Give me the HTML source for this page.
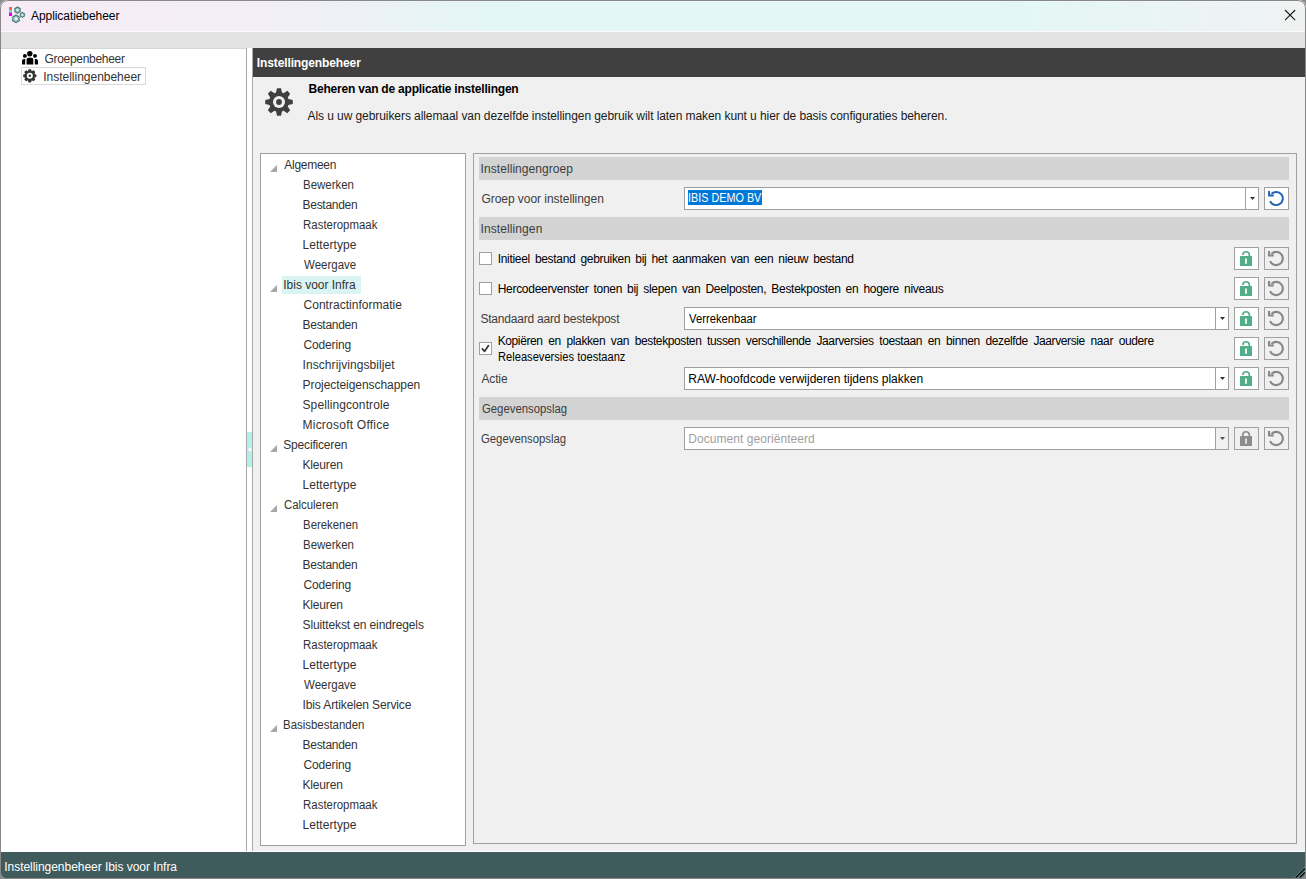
<!DOCTYPE html>
<html><head><meta charset="utf-8"><style>
*{box-sizing:border-box;margin:0;padding:0}
html,body{width:1306px;height:879px;overflow:hidden;background:#8c8c8c}
body{font-family:"Liberation Sans",sans-serif;font-size:12px;position:relative}
.a{position:absolute}
.t{position:absolute;white-space:nowrap;line-height:16px;font-size:12px;font-family:"Liberation Sans",sans-serif}
#win{position:absolute;left:0;top:0;width:1306px;height:879px;background:#f0f0f0;border-radius:8px 8px 7px 7px;overflow:hidden}
#frame{position:absolute;left:0;top:0;width:1306px;height:879px;border:1px solid #888;border-radius:8px 8px 7px 7px}
#title{position:absolute;left:0;top:0;width:1306px;height:31px;background:linear-gradient(90deg,#f7ebf6 0px,#f1eff7 300px,#e2f7f6 520px,#e3f7f6 1000px,#f0f2f2 1306px)}
#tline{position:absolute;left:0;top:31px;width:1306px;height:1px;background:#fbfbfb}
#band{position:absolute;left:0;top:32px;width:1306px;height:16px;background:#e3e3e3}
#left{position:absolute;left:0;top:48px;width:246px;height:804px;background:#fff}
#status{position:absolute;left:0;top:852px;width:1306px;height:27px;background:#3f5b5b}
.vl{position:absolute;width:1px;background:#a9a9a9}
#hdr{position:absolute;left:253px;top:48px;width:1053px;height:29px;background:#404040}
.box{position:absolute;border:1px solid #a0a0a0}
.sec{position:absolute;left:479px;width:810px;height:23px;background:#d3d3d3}
.dd{position:absolute;height:23px;border:1px solid #a0a0a0;background:#fff}
.dd i{position:absolute;right:12px;top:-1px;width:1px;height:23px;background:#a0a0a0}
.btn{position:absolute;width:25px;height:23px;border:1px solid #a0a0a0;background:#fff}
.btn.g{background:#f0f0f0}
.cb{position:absolute;left:479px;width:13px;height:13px;border:1px solid #a0a0a0;background:#fff}
svg{position:absolute;left:0;top:0;overflow:visible}
</style></head><body>
<div id="win">
<div id="title"></div><div id="tline"></div><div id="band"></div>
<div id="left"></div>
<div class="a" style="left:0;top:48px;width:246px;height:1px;background:#d6d6d6"></div>
<div class="a" style="left:246px;top:48px;width:7px;height:1px;background:#b4b4b4"></div>
<div class="vl" style="left:246px;top:48px;height:804px"></div>
<div class="a" style="left:247px;top:48px;width:5px;height:804px;background:#fff"></div>
<div class="vl" style="left:252px;top:48px;height:804px"></div>
<div class="a" style="left:247px;top:432px;width:5px;height:35px;background:#b3f0ec"></div>
<div id="hdr"></div>
<div class="a" style="left:21px;top:67px;width:125px;height:18px;border:1px solid #d9d9d9"></div>
<div class="box" style="left:260px;top:153px;width:206px;height:693px;background:#fff"></div>
<div class="box" style="left:473px;top:153px;width:824px;height:691px"></div>
<div class="a" style="left:282px;top:276px;width:79px;height:18px;background:#daf4f4"></div>
<div class="sec" style="top:157px"></div>
<div class="sec" style="top:217px"></div>
<div class="sec" style="top:397px"></div>
<div class="dd" style="left:684px;top:187px;width:575px"><i></i></div>
<div class="dd" style="left:684px;top:307px;width:545px"><i></i></div>
<div class="dd" style="left:684px;top:367px;width:545px"><i></i></div>
<div class="dd" style="left:684px;top:427px;width:545px"><i></i><b style="position:absolute;right:0;top:0;width:12px;height:21px;background:#f0f0f0"></b></div>
<div class="a" style="left:688px;top:190px;width:74px;height:15px;background:#0078d7"></div>
<div class="btn" style="left:1264px;top:187px"></div>
<div class="btn" style="left:1234px;top:247px"></div>
<div class="btn g" style="left:1264px;top:247px"></div>
<div class="btn" style="left:1234px;top:277px"></div>
<div class="btn g" style="left:1264px;top:277px"></div>
<div class="btn" style="left:1234px;top:307px"></div>
<div class="btn g" style="left:1264px;top:307px"></div>
<div class="btn" style="left:1234px;top:337px"></div>
<div class="btn g" style="left:1264px;top:337px"></div>
<div class="btn" style="left:1234px;top:367px"></div>
<div class="btn g" style="left:1264px;top:367px"></div>
<div class="btn g" style="left:1234px;top:427px"></div>
<div class="btn g" style="left:1264px;top:427px"></div>
<div class="cb" style="top:252px"></div>
<div class="cb" style="top:282px"></div>
<div class="cb" style="top:342px"></div>
<div class="a" style="left:0;top:851px;width:1306px;height:1px;background:#fff"></div>
<div id="status"></div>
<div class="t" style="left:31.00px;top:8px;color:#000;letter-spacing:-0.067px">Applicatiebeheer</div>
<div class="t" style="left:44.50px;top:51px;color:#333;letter-spacing:-0.300px">Groepenbeheer</div>
<div class="t" style="left:43.30px;top:69px;color:#333;letter-spacing:-0.018px">Instellingenbeheer</div>
<div class="t" style="left:256.80px;top:55px;color:#fff;letter-spacing:-0.118px;font-weight:700">Instellingenbeheer</div>
<div class="t" style="left:308.60px;top:81px;color:#000;letter-spacing:-0.216px;font-weight:700">Beheren van de applicatie instellingen</div>
<div class="t" style="left:307.50px;top:108px;color:#1a1a1a;letter-spacing:-0.074px">Als u uw gebruikers allemaal van dezelfde instellingen gebruik wilt laten maken kunt u hier de basis configuraties beheren.</div>
<div class="t" style="left:480.60px;top:161px;color:#3c3c3c;letter-spacing:0.062px">Instellingengroep</div>
<div class="t" style="left:481.40px;top:191px;color:#3c3c3c;letter-spacing:-0.045px">Groep voor instellingen</div>
<div class="t" style="left:687.60px;top:190px;color:#fff;transform:scaleX(0.9000);transform-origin:1px 0">IBIS DEMO BV</div>
<div class="t" style="left:480.60px;top:221px;color:#3c3c3c;letter-spacing:0.091px">Instellingen</div>
<div class="t" style="left:497.70px;top:251px;color:#000;letter-spacing:-0.312px;word-spacing:2.00px">Initieel bestand gebruiken bij het aanmaken van een nieuw bestand</div>
<div class="t" style="left:497.70px;top:281px;color:#000;letter-spacing:-0.291px;word-spacing:2.00px">Hercodeervenster tonen bij slepen van Deelposten, Bestekposten en hogere niveaus</div>
<div class="t" style="left:480.40px;top:311px;color:#3c3c3c;letter-spacing:-0.208px">Standaard aard bestekpost</div>
<div class="t" style="left:689.30px;top:311px;color:#000;transform:scaleX(0.9375);transform-origin:0px 0">Verrekenbaar</div>
<div class="t" style="left:497.70px;top:333px;color:#000;letter-spacing:-0.391px;word-spacing:2.75px">Kopiëren en plakken van bestekposten tussen verschillende Jaarversies toestaan en binnen dezelfde Jaarversie naar oudere</div>
<div class="t" style="left:497.70px;top:349px;color:#000;transform:scaleX(0.9265);transform-origin:1px 0">Releaseversies toestaanz</div>
<div class="t" style="left:481.40px;top:371px;color:#3c3c3c;letter-spacing:-0.125px">Actie</div>
<div class="t" style="left:688.30px;top:371px;color:#000;letter-spacing:0.000px">RAW-hoofdcode verwijderen tijdens plakken</div>
<div class="t" style="left:481.60px;top:401px;color:#3c3c3c;transform:scaleX(0.9444);transform-origin:0px 0">Gegevensopslag</div>
<div class="t" style="left:481.40px;top:431px;color:#3c3c3c;transform:scaleX(0.9444);transform-origin:0px 0">Gegevensopslag</div>
<div class="t" style="left:688.30px;top:431px;color:#a0a0a0;letter-spacing:0.050px">Document georiënteerd</div>
<div class="t" style="left:4.30px;top:859px;color:#fff;letter-spacing:-0.042px">Instellingenbeheer Ibis voor Infra</div>
<div class="t" style="left:284.30px;top:157px;color:#333;letter-spacing:-0.286px">Algemeen</div>
<div class="t" style="left:302.50px;top:177px;color:#333;transform:scaleX(0.9538);transform-origin:1px 0">Bewerken</div>
<div class="t" style="left:302.50px;top:197px;color:#333;letter-spacing:-0.275px">Bestanden</div>
<div class="t" style="left:302.50px;top:217px;color:#333;transform:scaleX(0.9532);transform-origin:1px 0">Rasteropmaak</div>
<div class="t" style="left:302.50px;top:237px;color:#333;letter-spacing:0.056px">Lettertype</div>
<div class="t" style="left:303.50px;top:257px;color:#333;transform:scaleX(0.9574);transform-origin:0px 0">Weergave</div>
<div class="t" style="left:283.30px;top:277px;color:#333;letter-spacing:-0.021px">Ibis voor Infra</div>
<div class="t" style="left:303.50px;top:297px;color:#333;letter-spacing:0.024px">Contractinformatie</div>
<div class="t" style="left:302.50px;top:317px;color:#333;letter-spacing:-0.275px">Bestanden</div>
<div class="t" style="left:303.50px;top:337px;color:#333;letter-spacing:-0.143px">Codering</div>
<div class="t" style="left:302.50px;top:357px;color:#333;letter-spacing:0.078px">Inschrijvingsbiljet</div>
<div class="t" style="left:302.50px;top:377px;color:#333;letter-spacing:-0.053px">Projecteigenschappen</div>
<div class="t" style="left:302.50px;top:397px;color:#333;letter-spacing:0.100px">Spellingcontrole</div>
<div class="t" style="left:302.50px;top:417px;color:#333;letter-spacing:0.233px">Microsoft Office</div>
<div class="t" style="left:283.30px;top:437px;color:#333;letter-spacing:-0.182px">Specificeren</div>
<div class="t" style="left:302.50px;top:457px;color:#333;letter-spacing:-0.167px">Kleuren</div>
<div class="t" style="left:302.50px;top:477px;color:#333;letter-spacing:0.056px">Lettertype</div>
<div class="t" style="left:284.30px;top:497px;color:#333;transform:scaleX(0.9474);transform-origin:0px 0">Calculeren</div>
<div class="t" style="left:302.50px;top:517px;color:#333;transform:scaleX(0.9474);transform-origin:1px 0">Berekenen</div>
<div class="t" style="left:302.50px;top:537px;color:#333;transform:scaleX(0.9538);transform-origin:1px 0">Bewerken</div>
<div class="t" style="left:302.50px;top:557px;color:#333;letter-spacing:-0.275px">Bestanden</div>
<div class="t" style="left:303.50px;top:577px;color:#333;letter-spacing:-0.143px">Codering</div>
<div class="t" style="left:302.50px;top:597px;color:#333;letter-spacing:-0.167px">Kleuren</div>
<div class="t" style="left:302.50px;top:617px;color:#333;letter-spacing:-0.117px">Sluittekst en eindregels</div>
<div class="t" style="left:302.50px;top:637px;color:#333;transform:scaleX(0.9532);transform-origin:1px 0">Rasteropmaak</div>
<div class="t" style="left:302.50px;top:657px;color:#333;letter-spacing:0.056px">Lettertype</div>
<div class="t" style="left:303.50px;top:677px;color:#333;transform:scaleX(0.9574);transform-origin:0px 0">Weergave</div>
<div class="t" style="left:302.50px;top:697px;color:#333;letter-spacing:-0.119px">Ibis Artikelen Service</div>
<div class="t" style="left:283.30px;top:717px;color:#333;transform:scaleX(0.9524);transform-origin:1px 0">Basisbestanden</div>
<div class="t" style="left:302.50px;top:737px;color:#333;letter-spacing:-0.275px">Bestanden</div>
<div class="t" style="left:303.50px;top:757px;color:#333;letter-spacing:-0.143px">Codering</div>
<div class="t" style="left:302.50px;top:777px;color:#333;letter-spacing:-0.167px">Kleuren</div>
<div class="t" style="left:302.50px;top:797px;color:#333;transform:scaleX(0.9532);transform-origin:1px 0">Rasteropmaak</div>
<div class="t" style="left:302.50px;top:817px;color:#333;letter-spacing:0.056px">Lettertype</div>
<svg width="1306" height="879" viewBox="0 0 1306 879"><rect x="9" y="7" width="3" height="3" fill="#ef6b54"/><rect x="9" y="10" width="3" height="2.5" fill="#76d9c9"/><rect x="9" y="12.5" width="3" height="3.5" fill="#dd00ea"/><path d="M16.49,7.86 L16.81,7.03 L18.19,7.03 L18.51,7.86 A2.46,2.46 0 0 1 18.94,8.11 L19.81,7.96 L20.51,9.16 L19.94,9.85 A2.46,2.46 0 0 1 19.94,10.35 L20.51,11.04 L19.81,12.24 L18.94,12.09 A2.46,2.46 0 0 1 18.51,12.34 L18.19,13.17 L16.81,13.17 L16.49,12.34 A2.46,2.46 0 0 1 16.06,12.09 L15.19,12.24 L14.49,11.04 L15.06,10.35 A2.46,2.46 0 0 1 15.06,9.85 L14.49,9.16 L15.19,7.96 L16.06,8.11 A2.46,2.46 0 0 1 16.49,7.86 Z" fill="#80c4bb" stroke="#2d5e59" stroke-width="0.9"/><circle cx="17.5" cy="10.1" r="1.57" fill="#fbfdfd" stroke="#4f8f88" stroke-width="0.4"/><path d="M21.62,13.16 L21.86,12.51 L22.94,12.51 L23.18,13.16 A1.91,1.91 0 0 1 23.52,13.35 L24.20,13.24 L24.74,14.17 L24.30,14.71 A1.91,1.91 0 0 1 24.30,15.09 L24.74,15.63 L24.20,16.56 L23.52,16.45 A1.91,1.91 0 0 1 23.18,16.64 L22.94,17.29 L21.86,17.29 L21.62,16.64 A1.91,1.91 0 0 1 21.28,16.45 L20.60,16.56 L20.06,15.63 L20.50,15.09 A1.91,1.91 0 0 1 20.50,14.71 L20.06,14.17 L20.60,13.24 L21.28,13.35 A1.91,1.91 0 0 1 21.62,13.16 Z" fill="#80c4bb" stroke="#2d5e59" stroke-width="0.9"/><circle cx="22.4" cy="14.9" r="1.23" fill="#fbfdfd" stroke="#4f8f88" stroke-width="0.4"/><path d="M14.77,16.06 L15.15,15.04 L16.85,15.04 L17.23,16.06 A3.00,3.00 0 0 1 17.76,16.36 L18.83,16.19 L19.68,17.66 L18.99,18.50 A3.00,3.00 0 0 1 18.99,19.10 L19.68,19.94 L18.83,21.41 L17.76,21.24 A3.00,3.00 0 0 1 17.23,21.54 L16.85,22.56 L15.15,22.56 L14.77,21.54 A3.00,3.00 0 0 1 14.24,21.24 L13.17,21.41 L12.32,19.94 L13.01,19.10 A3.00,3.00 0 0 1 13.01,18.50 L12.32,17.66 L13.17,16.19 L14.24,16.36 A3.00,3.00 0 0 1 14.77,16.06 Z" fill="#80c4bb" stroke="#2d5e59" stroke-width="0.9"/><circle cx="16" cy="18.8" r="1.93" fill="#fbfdfd" stroke="#4f8f88" stroke-width="0.4"/><path d="M1285,10 L1295.2,20.2 M1295.2,10 L1285,20.2" stroke="#1a1a1a" stroke-width="1.1" fill="none"/><g fill="#000"><circle cx="29.8" cy="53.8" r="2.7"/><circle cx="24.9" cy="55.9" r="1.95"/><circle cx="35" cy="55.9" r="1.95"/><path d="M26.6,59.6 Q26.6,57.8 28.4,57.8 L31.5,57.8 Q33.3,57.8 33.3,59.6 L33.3,64.6 L26.6,64.6 Z"/><path d="M25.2,59 L25.2,64.6 L23.2,64.6 Q22,64.6 22,63.4 L22,61 Q22,59 24,59 Z"/><path d="M34.8,59 L34.8,64.6 L36.8,64.6 Q38,64.6 38,63.4 L38,61 Q38,59 36,59 Z"/></g><path d="M27.90,71.28 L28.55,69.22 L31.05,69.22 L31.70,71.28 A4.90,4.90 0 0 1 31.65,71.26 L33.57,70.26 L35.34,72.03 L34.34,73.95 A4.90,4.90 0 0 1 34.32,73.90 L36.38,74.55 L36.38,77.05 L34.32,77.70 A4.90,4.90 0 0 1 34.34,77.65 L35.34,79.57 L33.57,81.34 L31.65,80.34 A4.90,4.90 0 0 1 31.70,80.32 L31.05,82.38 L28.55,82.38 L27.90,80.32 A4.90,4.90 0 0 1 27.95,80.34 L26.03,81.34 L24.26,79.57 L25.26,77.65 A4.90,4.90 0 0 1 25.28,77.70 L23.22,77.05 L23.22,74.55 L25.28,73.90 A4.90,4.90 0 0 1 25.26,73.95 L24.26,72.03 L26.03,70.26 L27.95,71.26 A4.90,4.90 0 0 1 27.90,71.28 Z" fill="#333"/><circle cx="29.8" cy="75.8" r="3.0" fill="#fff"/><circle cx="29.8" cy="75.8" r="1.2" fill="#333"/><path d="M276.00,92.57 L277.00,88.24 L281.00,88.24 L282.00,92.57 A9.90,9.90 0 0 1 283.55,93.21 L287.31,90.86 L290.14,93.69 L287.79,97.45 A9.90,9.90 0 0 1 288.43,99.00 L292.76,100.00 L292.76,104.00 L288.43,105.00 A9.90,9.90 0 0 1 287.79,106.55 L290.14,110.31 L287.31,113.14 L283.55,110.79 A9.90,9.90 0 0 1 282.00,111.43 L281.00,115.76 L277.00,115.76 L276.00,111.43 A9.90,9.90 0 0 1 274.45,110.79 L270.69,113.14 L267.86,110.31 L270.21,106.55 A9.90,9.90 0 0 1 269.57,105.00 L265.24,104.00 L265.24,100.00 L269.57,99.00 A9.90,9.90 0 0 1 270.21,97.45 L267.86,93.69 L270.69,90.86 L274.45,93.21 A9.90,9.90 0 0 1 276.00,92.57 Z" fill="#404040"/><circle cx="279" cy="102" r="6" fill="#f0f0f0"/><circle cx="279" cy="102" r="2.9" fill="#404040"/><path d="M277,165 L277,172 L270,172 Z" fill="#a6a6a6"/><path d="M277,285 L277,292 L270,292 Z" fill="#a6a6a6"/><path d="M277,445 L277,452 L270,452 Z" fill="#a6a6a6"/><path d="M277,505 L277,512 L270,512 Z" fill="#a6a6a6"/><path d="M277,725 L277,732 L270,732 Z" fill="#a6a6a6"/><path d="M251.2,447.2 L251.2,451.8 L247.8,449.5 Z" fill="#fff"/><path d="M1250.0,197 L1255.0,197 L1252.5,200 Z" fill="#333"/><path d="M1220.0,317 L1225.0,317 L1222.5,320 Z" fill="#333"/><path d="M1220.0,377 L1225.0,377 L1222.5,380 Z" fill="#333"/><path d="M1220,437 L1225,437 L1222.5,440 Z" fill="#555"/><path d="M1271.45,193.92 A6.6,6.6 0 1 1 1270.12,201.08" fill="none" stroke="#1f63b2" stroke-width="1.95"/><path d="M1269.05,191.1 V195.45 H1273.8" fill="none" stroke="#1f63b2" stroke-width="1.95"/><path d="M1271.45,253.92 A6.6,6.6 0 1 1 1270.12,261.08" fill="none" stroke="#888888" stroke-width="2.15"/><path d="M1269.05,251.1 V255.45 H1273.8" fill="none" stroke="#888888" stroke-width="2.15"/><path d="M1271.45,283.92 A6.6,6.6 0 1 1 1270.12,291.08" fill="none" stroke="#888888" stroke-width="2.15"/><path d="M1269.05,281.1 V285.45 H1273.8" fill="none" stroke="#888888" stroke-width="2.15"/><path d="M1271.45,313.92 A6.6,6.6 0 1 1 1270.12,321.08" fill="none" stroke="#888888" stroke-width="2.15"/><path d="M1269.05,311.1 V315.45 H1273.8" fill="none" stroke="#888888" stroke-width="2.15"/><path d="M1271.45,343.92 A6.6,6.6 0 1 1 1270.12,351.08" fill="none" stroke="#888888" stroke-width="2.15"/><path d="M1269.05,341.1 V345.45 H1273.8" fill="none" stroke="#888888" stroke-width="2.15"/><path d="M1271.45,373.92 A6.6,6.6 0 1 1 1270.12,381.08" fill="none" stroke="#888888" stroke-width="2.15"/><path d="M1269.05,371.1 V375.45 H1273.8" fill="none" stroke="#888888" stroke-width="2.15"/><path d="M1271.45,433.92 A6.6,6.6 0 1 1 1270.12,441.08" fill="none" stroke="#888888" stroke-width="2.15"/><path d="M1269.05,431.1 V435.45 H1273.8" fill="none" stroke="#888888" stroke-width="2.15"/><rect x="1240" y="256" width="12" height="10" rx="0.5" fill="#52ae88"/><rect x="1245" y="258.5" width="2" height="5.3" fill="#e6f4ec"/><path d="M1242.85,255.0 A3.25,3.25 0 0 1 1249.35,255.0 V256.5" fill="none" stroke="#52ae88" stroke-width="1.7"/><rect x="1240" y="286" width="12" height="10" rx="0.5" fill="#52ae88"/><rect x="1245" y="288.5" width="2" height="5.3" fill="#e6f4ec"/><path d="M1242.85,285.0 A3.25,3.25 0 0 1 1249.35,285.0 V286.5" fill="none" stroke="#52ae88" stroke-width="1.7"/><rect x="1240" y="316" width="12" height="10" rx="0.5" fill="#52ae88"/><rect x="1245" y="318.5" width="2" height="5.3" fill="#e6f4ec"/><path d="M1242.85,315.0 A3.25,3.25 0 0 1 1249.35,315.0 V316.5" fill="none" stroke="#52ae88" stroke-width="1.7"/><rect x="1240" y="346" width="12" height="10" rx="0.5" fill="#52ae88"/><rect x="1245" y="348.5" width="2" height="5.3" fill="#e6f4ec"/><path d="M1242.85,345.0 A3.25,3.25 0 0 1 1249.35,345.0 V346.5" fill="none" stroke="#52ae88" stroke-width="1.7"/><rect x="1240" y="376" width="12" height="10" rx="0.5" fill="#52ae88"/><rect x="1245" y="378.5" width="2" height="5.3" fill="#e6f4ec"/><path d="M1242.85,375.0 A3.25,3.25 0 0 1 1249.35,375.0 V376.5" fill="none" stroke="#52ae88" stroke-width="1.7"/><rect x="1240" y="436" width="12" height="10" rx="0.5" fill="#8c8c8c"/><rect x="1245" y="438.5" width="2" height="5.3" fill="#dedede"/><path d="M1242.85,436.5 V435.0 A3.25,3.25 0 0 1 1249.35,435.0 V436.5" fill="none" stroke="#8c8c8c" stroke-width="1.7"/><path d="M482.3,348.8 L484.6,351.3 L488.5,345.6" fill="none" stroke="#333" stroke-width="1.7" stroke-linejoin="round" stroke-linecap="round"/><path d="M1294.5,877.5 L1305,867 M1298.5,877.5 L1305,871" stroke="#a6dcd6" stroke-width="1"/><path d="M1295.5,877.5 L1305,868 M1299.5,877.5 L1305,872" stroke="#050a0a" stroke-width="1.4"/></svg>
</div>
<div id="frame"></div>
</body></html>
